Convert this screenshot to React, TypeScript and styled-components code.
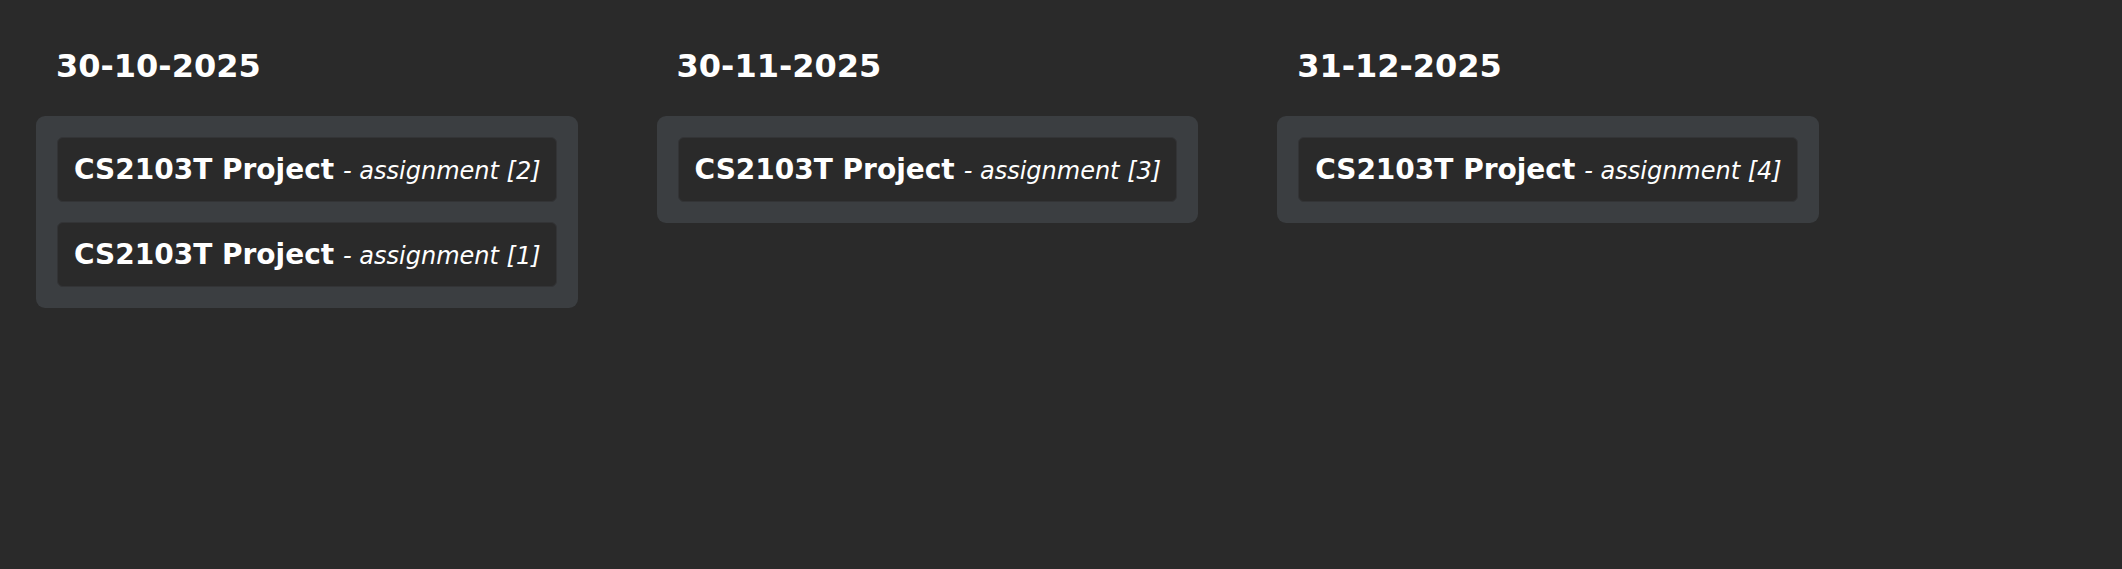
import React from "react";
import styled, { createGlobalStyle } from "styled-components";

const GlobalStyle = createGlobalStyle`
  html, body {
    margin: 0;
    padding: 0;
    background: #2a2a2a;
    color: #ffffff;
    font-family: "DejaVu Sans", Verdana, sans-serif;
  }
`;

const Board = styled.div`
  display: flex;
  align-items: flex-start;
  gap: 79px;
  padding: 47px 36px;
  min-height: 569px;
  box-sizing: border-box;
  background: #2a2a2a;
`;

const Column = styled.section`
  display: flex;
  flex-direction: column;
  align-items: flex-start;
`;

const DateHeading = styled.h1`
  margin: 0 0 31px 20px;
  font-size: 32px;
  font-weight: bold;
  line-height: normal;
  color: #ffffff;
`;

const Card = styled.div`
  display: flex;
  flex-direction: column;
  gap: 20px;
  padding: 21px;
  background: #3b3e41;
  border-radius: 9px;
`;

const Item = styled.div`
  padding: 15px 15px 15px 16px;
  background: #2a2a2a;
  border: 1px solid #333436;
  border-radius: 6px;
  white-space: nowrap;
  font-size: 28px;
  font-weight: normal;
  line-height: normal;
`;

const Title = styled.strong`
  font-size: 28px;
  font-weight: bold;
`;

const Detail = styled.em`
  font-size: 24px;
  font-weight: normal;
  font-style: italic;
`;

type Entry = { title: string; detail: string };
type Group = { date: string; entries: Entry[] };

const groups: Group[] = [
  {
    date: "30-10-2025",
    entries: [
      { title: "CS2103T Project", detail: "assignment [2]" },
      { title: "CS2103T Project", detail: "assignment [1]" },
    ],
  },
  {
    date: "30-11-2025",
    entries: [{ title: "CS2103T Project", detail: "assignment [3]" }],
  },
  {
    date: "31-12-2025",
    entries: [{ title: "CS2103T Project", detail: "assignment [4]" }],
  },
];

export default function App() {
  return (
    <>
      <GlobalStyle />
      <Board>
        {groups.map((g) => (
          <Column key={g.date}>
            <DateHeading>{g.date}</DateHeading>
            <Card>
              {g.entries.map((e, i) => (
                <Item key={i}>
                  <Title>{e.title}</Title> <Detail>- {e.detail}</Detail>
                </Item>
              ))}
            </Card>
          </Column>
        ))}
      </Board>
    </>
  );
}
